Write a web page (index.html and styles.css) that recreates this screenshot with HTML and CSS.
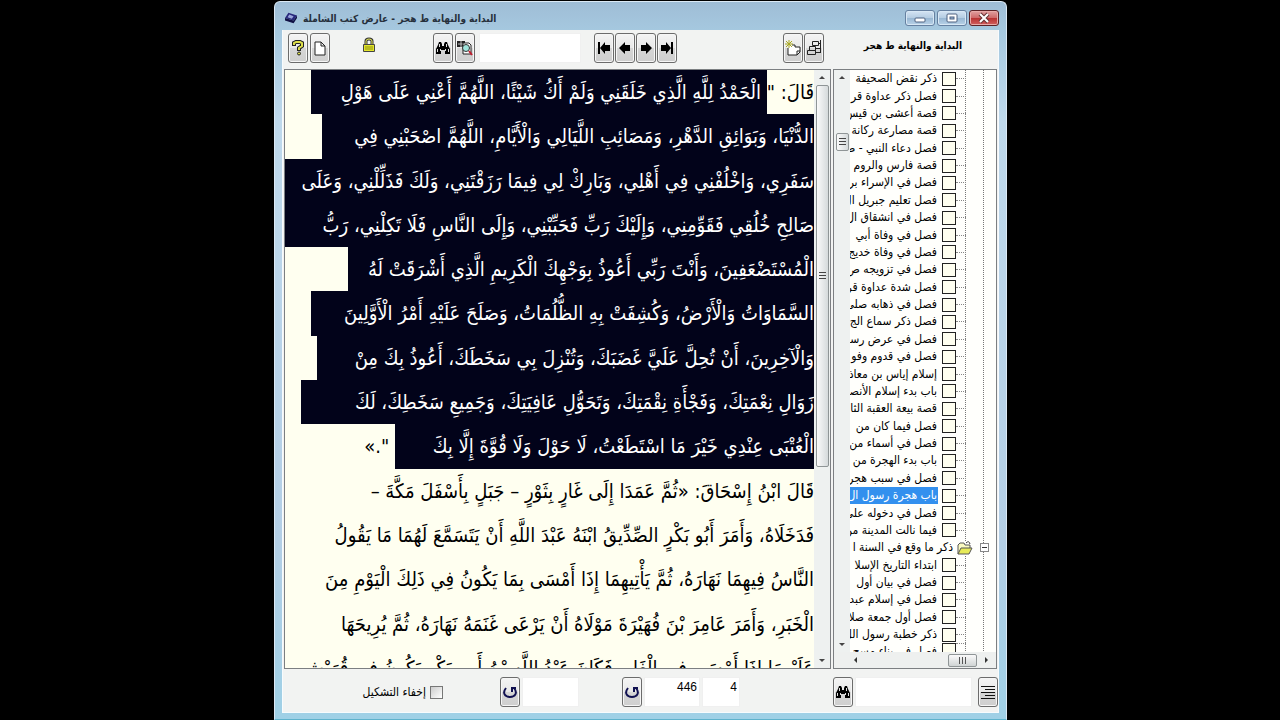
FILE: index.html
```html
<!DOCTYPE html>
<html lang="ar">
<head>
<meta charset="utf-8">
<title>البداية والنهاية ط هجر</title>
<link rel="stylesheet" href="styles.css">
</head>
<body>
<svg class="defs" aria-hidden="true">
  <symbol id="i-bino" viewBox="0 0 16 16"><path d="M4 2h2l1 2v2h2V4l1-2h2l1 3 2 4v5h-5v-4H6v4H1V9l2-4z" fill="#000"/><path d="M4.500 4v3M2.500 9v3M11.500 4v3M13.500 9v3M5.500 9v2M10.500 9v2" stroke="#ddd" fill="none"/></symbol>
  <symbol id="i-arrow" viewBox="0 0 16 16"><path d="M14 8 8 2v3H3v6h5v3z" fill="#000"/></symbol>
  <symbol id="i-end" viewBox="0 0 16 16"><path d="M12 8 7 2v3H2v6h5v3zM12 2h2v12h-2z" fill="#000"/></symbol>
  <symbol id="i-turn" viewBox="0 0 16 16"><path d="M4 4c-4 5-1 9 4 9s8-4 4-9M10 8V4h4" fill="none" stroke="#101050" stroke-width="2"/></symbol>
</svg>
<main class="window">
  <header class="titlebar">
    <svg class="app-icon" viewBox="0 0 16 14"><path d="M5 1 15 4l-4 6L1 7z" fill="#28287c"/><path d="M1 7v3l10 3 4-6V4l-4 6z" fill="#101044"/><path d="m6 3 5 2-2 3-5-2z" fill="#98a4dc"/></svg>
    <h1 class="title" dir="rtl">البداية والنهاية ط هجر - عارض كتب الشاملة</h1>
    <div class="controls">
      <button class="ctl" aria-label="تصغير"><svg viewBox="0 0 28 14"><rect x="9" y="7" width="10" height="4" rx="1" fill="#fff" stroke="#4c6180"/></svg></button>
      <button class="ctl" aria-label="تكبير"><svg viewBox="0 0 28 14"><rect x="9" y="3" width="10" height="8" rx="1" fill="#fff" stroke="#4c6180"/><rect x="12" y="6" width="4" height="2" fill="#9bb8d8" stroke="#4c6180"/></svg></button>
      <button class="ctl close" aria-label="إغلاق"><svg viewBox="0 0 28 14"><path d="m10 3 8 8m0-8-8 8" stroke="#633" stroke-width="4"/><path d="m10 3 8 8m0-8-8 8" stroke="#fff" stroke-width="2"/></svg></button>
    </div>
  </header>
  <div class="client">
    <div class="toolbar">
      <div class="group">
        <button class="tool" aria-label="مساعدة"><svg viewBox="0 0 16 16"><path d="M4 6V3l2-1h4l2 1v3L9 8v3" fill="none" stroke="#222" stroke-width="4"/><path d="M4 5V3l2-1h4l2 1v3L9 8v2" fill="none" stroke="#dfe04a" stroke-width="2"/><circle cx="9" cy="13.500" r="1.500" fill="#dfe04a" stroke="#222"/></svg></button>
        <button class="tool" aria-label="صفحة جديدة"><svg viewBox="0 0 16 16"><path d="M3 2h6l4 4v9H3zM9 2v4h4" fill="#fff" stroke="#222"/></svg></button>
      </div>
      <svg class="lock" viewBox="0 0 14 16"><path d="M4 7V4q0-2 3-2t3 2v3" fill="none" stroke="#333" stroke-width="3"/><path d="M4 7V4q0-2 3-2t3 2v3" fill="none" stroke="#eef060"/><path d="M1.500 7.500h11v7h-11z" fill="#e4e62c" stroke="#444"/><path d="M3 10h8M3 12h8" stroke="#8e9010"/></svg>
      <div class="group search">
        <button class="tool" aria-label="بحث"><svg><use href="#i-bino"/></svg></button>
        <button class="tool" aria-label="بحث متقدم"><svg viewBox="0 0 16 16"><path d="M0 1h8v6H0z" fill="#222"/><path d="M1 4h6M4 1v6" stroke="#bbb"/><path d="M6 3h6l2 2v9H6z" fill="#fff" stroke="#222"/><circle cx="9" cy="8" r="3.500" fill="#9fe4dc" stroke="#333"/><path d="m12 11 3 4" stroke="#c02030" stroke-width="2"/></svg></button>
        <input class="field find" type="text" aria-label="نص البحث">
      </div>
      <div class="group nav">
        <button class="tool" aria-label="الأول"><svg class="flip"><use href="#i-end"/></svg></button>
        <button class="tool" aria-label="السابق"><svg class="flip"><use href="#i-arrow"/></svg></button>
        <button class="tool" aria-label="التالي"><svg><use href="#i-arrow"/></svg></button>
        <button class="tool" aria-label="الأخير"><svg><use href="#i-end"/></svg></button>
      </div>
      <div class="group views">
        <button class="tool" aria-label="نافذة جديدة"><svg viewBox="0 0 16 16"><path d="M7 5h3v2h5v5l-3 3H3V8" fill="#fff" stroke="#222"/><path d="M15 11h-3v4" fill="none" stroke="#222"/><path d="M4 0v8M0 4h8M1 1l6 6M7 1 1 7" stroke="#a8a820"/></svg></button>
        <button class="tool" aria-label="الفهرس"><svg viewBox="0 0 16 16"><path d="M6.500 1.500h6v4h-6zM3.500 6.500h6v4h-6zM1.500 10.500h8v4h-8zM14.500 0v13M12 3.500h3M9 8.500h5M10 12.500h5" fill="none" stroke="#222"/></svg></button>
      </div>
      <strong class="book" dir="rtl">البداية والنهاية ط هجر</strong>
    </div>
    <div class="panes">
      <section class="reader">
        <div class="lines" dir="rtl">
          <p style="width:95%">قَالَ: "<mark> الْحَمْدُ لِلَّهِ الَّذِي خَلَقَنِي وَلَمْ أَكُ شَيْئًا، اللَّهُمَّ أَعْنِي عَلَى هَوْلِ </mark></p>
          <p style="width:93%"><mark>الدُّنْيَا، وَبَوَائِقِ الدَّهْرِ، وَمَصَائِبِ اللَّيَالِي وَالْأَيَّامِ، اللَّهُمَّ اصْحَبْنِي فِي </mark></p>
          <p style="width:100%"><mark>سَفَرِي، وَاخْلُفْنِي فِي أَهْلِي، وَبَارِكْ لِي فِيمَا رَزَقْتَنِي، وَلَكَ فَذَلِّلْنِي، وَعَلَى </mark></p>
          <p style="width:100%"><mark>صَالِحِ خُلُقِي فَقَوِّمِنِي، وَإِلَيْكَ رَبِّ فَحَبِّبْنِي، وَإِلَى النَّاسِ فَلَا تَكِلْنِي، رَبُّ </mark></p>
          <p style="width:88%"><mark>الْمُسْتَضْعَفِينَ، وَأَنْتَ رَبِّي أَعُوذُ بِوَجْهِكَ الْكَرِيمِ الَّذِي أَشْرَقَتْ لَهُ </mark></p>
          <p style="width:95%"><mark>السَّمَاوَاتُ وَالْأَرْضُ، وَكُشِفَتْ بِهِ الظُّلُمَاتُ، وَصَلَحَ عَلَيْهِ أَمْرُ الْأَوَّلِينَ </mark></p>
          <p style="width:94%"><mark>وَالْآخِرِينَ، أَنْ تُحِلَّ عَلَيَّ غَضَبَكَ، وَتُنْزِلَ بِي سَخَطَكَ، أَعُوذُ بِكَ مِنْ </mark></p>
          <p style="width:97%"><mark>زَوَالِ نِعْمَتِكَ، وَفَجْأَةِ نِقْمَتِكَ، وَتَحَوُّلِ عَافِيَتِكَ، وَجَمِيعِ سَخَطِكَ، لَكَ </mark></p>
          <p style="width:85%"><mark>الْعُتْبَى عِنْدِي خَيْرَ مَا اسْتَطَعْتُ، لَا حَوْلَ وَلَا قُوَّةَ إِلَّا بِكَ</mark> ".»</p>
          <p>قَالَ ابْنُ إِسْحَاقَ: «ثُمَّ عَمَدَا إِلَى غَارٍ بِثَوْرٍ – جَبَلٍ بِأَسْفَلَ مَكَّةَ –</p>
          <p>فَدَخَلَاهُ، وَأَمَرَ أَبُو بَكْرٍ الصِّدِّيقُ ابْنَهُ عَبْدَ اللَّهِ أَنْ يَتَسَمَّعَ لَهُمَا مَا يَقُولُ</p>
          <p>النَّاسُ فِيهِمَا نَهَارَهُ، ثُمَّ يَأْتِيهِمَا إِذَا أَمْسَى بِمَا يَكُونُ فِي ذَلِكَ الْيَوْمِ مِنَ</p>
          <p>الْخَبَرِ، وَأَمَرَ عَامِرَ بْنَ فُهَيْرَةَ مَوْلَاهُ أَنْ يَرْعَى غَنَمَهُ نَهَارَهُ، ثُمَّ يُرِيحَهَا</p>
          <p>عَلَيْهِمَا إِذَا أَمْسَى فِي الْغَارِ، فَكَانَ عَبْدُ اللَّهِ بْنُ أَبِي بَكْرٍ يَكُونُ فِي قُرَيْشٍ</p>
        </div>
        <div class="vscroll"><i class="up"></i><div class="thumb"></div><i class="down"></i></div>
      </section>
      <section class="index">
        <div class="vscroll"><i class="up"></i><div class="thumb"></div><i class="down"></i></div>
        <div class="tree" dir="rtl">
          <label><input type="checkbox"><span>ذكر نقض الصحيفة</span></label>
          <label><input type="checkbox"><span>فصل ذكر عداوة قر</span></label>
          <label><input type="checkbox"><span>قصة أعشى بن قيس</span></label>
          <label><input type="checkbox"><span>قصة مصارعة ركانة</span></label>
          <label><input type="checkbox"><span>فصل دعاء النبي - ص</span></label>
          <label><input type="checkbox"><span>قصة فارس والروم</span></label>
          <label><input type="checkbox"><span>فصل في الإسراء بر</span></label>
          <label><input type="checkbox"><span>فصل تعليم جبريل ال</span></label>
          <label><input type="checkbox"><span>فصل في انشقاق ال</span></label>
          <label><input type="checkbox"><span>فصل في وفاة أبي</span></label>
          <label><input type="checkbox"><span>فصل في وفاة خديج</span></label>
          <label><input type="checkbox"><span>فصل في تزويجه ص</span></label>
          <label><input type="checkbox"><span>فصل شدة عداوة قر</span></label>
          <label><input type="checkbox"><span>فصل في ذهابه صلى</span></label>
          <label><input type="checkbox"><span>فصل ذكر سماع الج</span></label>
          <label><input type="checkbox"><span>فصل في عرض رسو</span></label>
          <label><input type="checkbox"><span>فصل في قدوم وفو</span></label>
          <label><input type="checkbox"><span>إسلام إياس بن معاذ</span></label>
          <label><input type="checkbox"><span>باب بدء إسلام الأنصا</span></label>
          <label><input type="checkbox"><span>قصة بيعة العقبة الثا</span></label>
          <label><input type="checkbox"><span>فصل فيما كان من</span></label>
          <label><input type="checkbox"><span>فصل في أسماء من</span></label>
          <label><input type="checkbox"><span>باب بدء الهجرة من</span></label>
          <label><input type="checkbox"><span>فصل في سبب هجر</span></label>
          <label class="selected"><input type="checkbox"><span>باب هجرة رسول ال</span></label>
          <label><input type="checkbox"><span>فصل في دخوله علي</span></label>
          <label><input type="checkbox"><span>فيما نالت المدينة من</span></label>
          <div class="branch"><button class="fold" aria-label="طي"></button><svg viewBox="0 0 16 14"><path d="M1 13V4l2-2h4l1 2h5v3" fill="#fafac0" stroke="#555"/><path d="M1 13 4 7h11l-3 6z" fill="#e6ea58" stroke="#555"/><path d="M9 2q3-3 4 1" fill="none" stroke="#333"/></svg><span>ذكر ما وقع في السنة ا</span></div>
          <label><input type="checkbox"><span>ابتداء التاريخ الإسلا</span></label>
          <label><input type="checkbox"><span>فصل في بيان أول</span></label>
          <label><input type="checkbox"><span>فصل في إسلام عبد</span></label>
          <label><input type="checkbox"><span>فصل أول جمعة صلا</span></label>
          <label><input type="checkbox"><span>ذكر خطبة رسول الل</span></label>
          <label><input type="checkbox"><span>فصل في بناء مسج</span></label>
        </div>
        <div class="hscroll"><i class="left"></i><div class="hthumb"></div><i class="right"></i></div>
      </section>
    </div>
    <footer class="statusbar">
      <label class="hide-marks" dir="rtl"><input type="checkbox"><span>إخفاء التشكيل</span></label>
      <div class="group jump">
        <button class="tool" aria-label="اذهب"><svg><use href="#i-turn"/></svg></button>
        <input class="field" type="text" aria-label="رقم الحديث">
      </div>
      <div class="group page">
        <button class="tool" aria-label="اذهب إلى الصفحة"><svg><use href="#i-turn"/></svg></button>
        <input class="field" type="text" aria-label="الصفحة" value="446">
        <input class="field part" type="text" aria-label="الجزء" value="4">
      </div>
      <div class="group lookup">
        <button class="tool" aria-label="بحث في الفهرس"><svg><use href="#i-bino"/></svg></button>
        <input class="field" type="text" aria-label="نص الفهرس">
        <button class="tool" aria-label="قائمة"><svg viewBox="0 0 16 16"><path d="M1 2.500h14M5 5.500h10M1 8.500h14M5 11.500h10M1 14.500h14" stroke="#111"/></svg></button>
      </div>
    </footer>
  </div>
</main>
</body>
</html>
```
FILE: styles.css
```css
* { box-sizing: border-box; }
body {
  margin: 0;
  height: 100vh;
  padding: 1px 273px 0 274px;
  background: #000;
  color: #000;
  font-family: "DejaVu Sans Condensed", "DejaVu Sans", sans-serif;
  font-size: 12px;
  overflow: hidden;
}
button, input { font: inherit; margin: 0; padding: 0; }
i { display: block; }
.defs { display: none; }
.window {
  display: flex;
  flex-direction: column;
  height: 100%;
  padding: 0 7px 6px;
  border: 1px solid #dbe9f5;
  border-bottom-color: #5fb2cc;
  border-radius: 6px 6px 0 0;
  background: linear-gradient(#9fbdd6, #a5c8df 28px, #bfd9ec 120px, #b4cfe6 75%, #9fd0e6);
}
.titlebar { display: flex; align-items: center; gap: 5px; height: 28px; flex: none; padding-top: 4px; }
.app-icon { width: 14px; height: 12px; margin-left: 2px; }
.title { flex: 1; margin: 0; font-size: 10px; font-weight: bold; text-align: left; color: #26303c; white-space: nowrap; }
.controls { display: flex; gap: 2px; }
.ctl {
  width: 30px;
  height: 16px;
  border: 1px solid #6580a0;
  border-radius: 3px;
  background: linear-gradient(#d4e4f3, #b4cce2 50%, #97b6d2 50%, #b8d2e8);
  box-shadow: inset 0 0 0 1px #d8e8f5;
}
.ctl svg { display: block; width: 100%; height: 100%; }
.close { border-color: #5c2226; background: linear-gradient(#e0a0a0, #cf6868 50%, #b83030 50%, #d06060); box-shadow: inset 0 0 0 1px #e8aaa8; }
.client { flex: 1; min-height: 0; display: flex; flex-direction: column; background: #f2f3f2; border: 1px solid #f8fbfd; border-top: 0; }
.toolbar { display: flex; height: 39px; flex: none; padding: 3px 0 0 5px; }
.group { display: flex; gap: 2px; }
.tool {
  display: grid;
  place-items: center;
  flex: none;
  width: 20px;
  height: 30px;
  border: 1px solid #6c6c6c;
  border-radius: 3px;
  background: linear-gradient(#f4f4f4, #e8e8e8 50%, #d6d6d6 50%, #cfcfcf);
  box-shadow: inset 0 0 0 1px #f6f6f6;
}
.tool svg { width: 16px; height: 16px; }
.flip { transform: scaleX(-1); }
.lock { width: 14px; height: 16px; margin: 4px 0 0 32px; }
.search { margin-left: 57px; }
.field { border: 1px solid #f0f0f0; background: #fff; min-width: 0; height: 30px; font-family: "Liberation Sans", sans-serif; font-size: 12px; text-align: right; }
.find { width: 102px; margin-left: 2px; }
.nav { margin-left: 13px; gap: 1px; }
.views { margin-left: auto; gap: 1px; }
.book { width: 174px; padding: 7px 36px 0 0; font-size: 10px; text-align: start; white-space: nowrap; }
.panes { flex: 1; min-height: 0; display: flex; gap: 2px; padding: 0 1px; }
.reader { flex: 1; min-width: 0; display: flex; border: 1px solid #7c7f82; background: #fffff0; }
.lines {
  flex: 1;
  min-width: 0;
  display: grid;
  grid-template-rows: repeat(13, minmax(0, 2fr)) minmax(0, 1fr);
  overflow: hidden;
  font-size: 20px;
  line-height: 44px;
}
.lines p { margin: 0; display: flex; white-space: pre; }
.lines mark { flex: 1; background: #02031a; color: #fff; }
.vscroll { flex: none; width: 16px; display: flex; flex-direction: column; align-items: center; background: #eef1f0; }
.up, .down { border: 3px solid transparent; }
.up { border-bottom-color: #444; border-top: 0; margin: 6px 0; }
.down { border-top-color: #444; border-bottom: 0; margin: auto 0 6px; }
.thumb {
  width: 13px;
  border: 1px solid #8f9596;
  border-radius: 2px;
  background: repeating-linear-gradient(#444 0 1px, transparent 1px 3px) center / 7px 8px no-repeat, linear-gradient(90deg, #fafafa, #d5dadb);
}
.reader .thumb { height: 382px; }
.index {
  width: 164px;
  flex: none;
  display: grid;
  grid-template: minmax(0, 1fr) 16px / 16px minmax(0, 1fr);
  border: 1px solid #7c7f82;
  background: #fff;
}
.index .thumb { height: 18px; margin-top: 48px; }
.tree {
  display: grid;
  grid-template-rows: repeat(33, minmax(0, 2fr)) minmax(0, 1fr);
  overflow: hidden;
  padding-right: 30px;
  background:
    repeating-linear-gradient(#777 0 1px, transparent 1px 2px) right 30px top / 1px 100% no-repeat,
    repeating-linear-gradient(#777 0 1px, transparent 1px 2px) right 12px top / 1px 100% no-repeat,
    #fffffc;
  line-height: 17px;
}
.tree label, .branch { display: flex; align-items: center; white-space: nowrap; overflow: hidden; }
.tree label:last-child { align-items: flex-start; }
.tree label::before { content: ""; flex: none; width: 10px; border-top: 1px dotted #888; }
.tree input { appearance: none; flex: none; width: 14px; height: 14px; border: 1px solid #222; background: #fffff0; margin-left: 4px; }
.tree label span { flex: 1; padding-right: 1px; }
.tree .selected span { background: #3390ee; color: #fff; }
.branch { margin-right: -23px; }
.fold { flex: none; width: 9px; height: 9px; border: 1px solid #888; background: linear-gradient(#333, #333) center / 5px 1px no-repeat, #fff; margin-left: 7px; padding: 0; }
.branch svg { flex: none; width: 16px; height: 14px; margin-left: 4px; background: #fffffc; }
.hscroll { grid-column: 1 / 3; display: flex; align-items: center; padding: 0 8px 0 20px; background: #eef0ef; }
.left, .right { border: 3px solid transparent; }
.left { border-right-color: #333; border-left: 0; }
.right { border-left-color: #333; border-right: 0; margin-left: 8px; }
.hthumb {
  width: 29px;
  height: 13px;
  margin-left: auto;
  border: 1px solid #8f9596;
  border-radius: 2px;
  background: repeating-linear-gradient(90deg, #555 0 1px, transparent 1px 3px) center / 8px 7px no-repeat, linear-gradient(#fafafa, #d0d4d4);
}
.statusbar { display: flex; height: 43px; flex: none; padding: 8px 0 0; }
.hide-marks { display: flex; align-items: center; gap: 4px; width: 160px; height: 30px; white-space: nowrap; }
.hide-marks input { appearance: none; width: 13px; height: 13px; border: 1px solid #777; background: linear-gradient(135deg, #ccc, #fff); }
.jump { margin-left: 57px; }
.jump .field { width: 57px; }
.page { margin-left: 43px; }
.page .field { width: 56px; padding: 0 2px 10px; }
.page .part { width: 38px; }
.lookup { margin-left: auto; }
.lookup .field { width: 117px; margin-right: 4px; }
```
